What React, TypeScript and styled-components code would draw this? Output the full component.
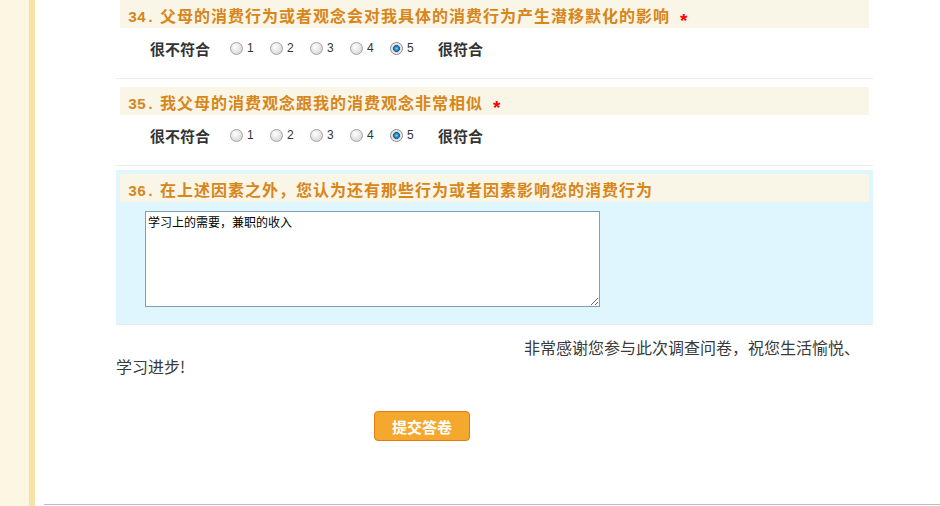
import React from "react";
import styled, { createGlobalStyle } from "styled-components";

const GlobalStyle = createGlobalStyle`
  html, body {
    margin: 0;
    padding: 0;
    background: #ffffff;
    overflow: hidden;
  }
  body {
    font-family: "Noto Sans CJK SC", "Liberation Sans", sans-serif;
    color: #333333;
  }
`;

const Page = styled.div`
  display: flex;
  min-height: 506px;
`;

const LeftRail = styled.div`
  width: 29px;
  flex-shrink: 0;
  background: #fdf6e3;
  border-right: 6px solid #f8e3a6;
`;

const Main = styled.div`
  flex: 1;
  display: flex;
  flex-direction: column;
  padding-left: 9px;
`;

const Content = styled.div`
  padding-left: 72px;
`;

const Survey = styled.div`
  width: 757px;
`;

const QBlock = styled.div<{ $active?: boolean }>`
  margin-top: 4px;
  padding: 4px;
  border-bottom: 1px solid #ebebeb;
  background: ${(p) => (p.$active ? "#dff6fe" : "transparent")};
  &:first-child {
    margin-top: 0;
    padding-top: 0;
  }
`;

const QHeader = styled.div`
  height: 28px;
  line-height: 30px;
  background: #f9f5e7;
  padding-left: 8px;
  color: #d7861a;
  font-size: 16px;
  font-weight: bold;
  letter-spacing: 1px;
  white-space: nowrap;
`;

const QNum = styled.span`
  display: inline-block;
  width: 32px;
  font-family: "Liberation Mono", monospace;
  font-size: 15px;
  letter-spacing: 0;
`;

const Required = styled.span`
  margin-left: 10px;
  color: #ff0000;
  font-family: "Liberation Sans", sans-serif;
  font-size: 19px;
  font-weight: bold;
  vertical-align: -5px;
`;

const ScaleRow = styled.div`
  display: flex;
  align-items: center;
  height: 26px;
  margin: 7px 0 13px;
  padding-left: 30px;
`;

const ScaleLabel = styled.span<{ $end?: boolean }>`
  font-size: 15px;
  font-weight: bold;
  color: #333333;
  margin-left: ${(p) => (p.$end ? "8px" : "0")};
  margin-right: ${(p) => (p.$end ? "0" : "20px")};
`;

const Option = styled.label`
  display: flex;
  align-items: center;
  width: 40px;
  font-family: "Liberation Sans", sans-serif;
  font-size: 12px;
  color: #333333;
`;

const Radio = styled.input.attrs({ type: "radio" })`
  appearance: none;
  -webkit-appearance: none;
  width: 13px;
  height: 13px;
  margin: 0 4px 0 0;
  border-radius: 50%;
  border: 1px solid #a4a4a4;
  box-sizing: border-box;
  background: radial-gradient(circle at 40% 35%, #ffffff 0%, #e8e8e8 45%, #c9c9c9 100%);
  &:checked {
    border-color: #8a8a8a;
    background: radial-gradient(
      circle at 50% 50%,
      #8fd3f5 0%,
      #2a8fcf 22%,
      #0e5d93 40%,
      #d8d8d8 48%,
      #f0f0f0 70%,
      #cfcfcf 100%
    );
  }
`;

const AnswerBox = styled.textarea`
  display: block;
  box-sizing: border-box;
  width: 455px;
  height: 96px;
  margin: 9px 0 13px 25px;
  padding: 2px;
  border: 1px solid #7f9db9;
  font-family: "Noto Sans CJK SC", sans-serif;
  font-size: 12px;
  line-height: 15px;
  color: #000000;
  background: #ffffff;
  outline: none;
`;

const Thanks = styled.p`
  width: 757px;
  margin: 13px 0 0;
  text-indent: 408px;
  font-size: 16px;
  line-height: 19px;
  color: #3a3a3a;
`;

const SubmitButton = styled.button`
  display: block;
  width: 96px;
  height: 30px;
  margin: 35px 0 0 258px;
  padding: 0;
  border: 1px solid #e27c12;
  border-radius: 4px;
  background: #f5a82e;
  color: #ffffff;
  font-family: "Noto Sans CJK SC", sans-serif;
  font-size: 15px;
  font-weight: bold;
  cursor: pointer;
`;

const Footer = styled.div`
  margin-top: 63px;
  border-top: 1px solid #bdbdbd;
  height: 20px;
`;

type ScaleQ = { num: string; title: string; selected: number };

const scaleQuestions: ScaleQ[] = [
  {
    num: "34.",
    title: "父母的消费行为或者观念会对我具体的消费行为产生潜移默化的影响",
    selected: 5,
  },
  { num: "35.", title: "我父母的消费观念跟我的消费观念非常相似", selected: 5 },
];

function ScaleQuestion({ q }: { q: ScaleQ }) {
  return (
    <QBlock>
      <QHeader>
        <QNum>{q.num}</QNum>
        {q.title}
        <Required>*</Required>
      </QHeader>
      <ScaleRow>
        <ScaleLabel>很不符合</ScaleLabel>
        {[1, 2, 3, 4, 5].map((n) => (
          <Option key={n}>
            <Radio name={`q${q.num}`} defaultChecked={n === q.selected} />
            {n}
          </Option>
        ))}
        <ScaleLabel $end>很符合</ScaleLabel>
      </ScaleRow>
    </QBlock>
  );
}

export default function App() {
  return (
    <>
      <GlobalStyle />
      <Page>
        <LeftRail />
        <Main>
          <Content>
            <Survey>
              {scaleQuestions.map((q) => (
                <ScaleQuestion key={q.num} q={q} />
              ))}
              <QBlock $active>
                <QHeader>
                  <QNum>36.</QNum>
                  在上述因素之外，您认为还有那些行为或者因素影响您的消费行为
                </QHeader>
                <AnswerBox defaultValue="学习上的需要，兼职的收入" />
              </QBlock>
            </Survey>
            <Thanks>非常感谢您参与此次调查问卷，祝您生活愉悦、学习进步!</Thanks>
            <SubmitButton type="button">提交答卷</SubmitButton>
          </Content>
          <Footer />
        </Main>
      </Page>
    </>
  );
}
